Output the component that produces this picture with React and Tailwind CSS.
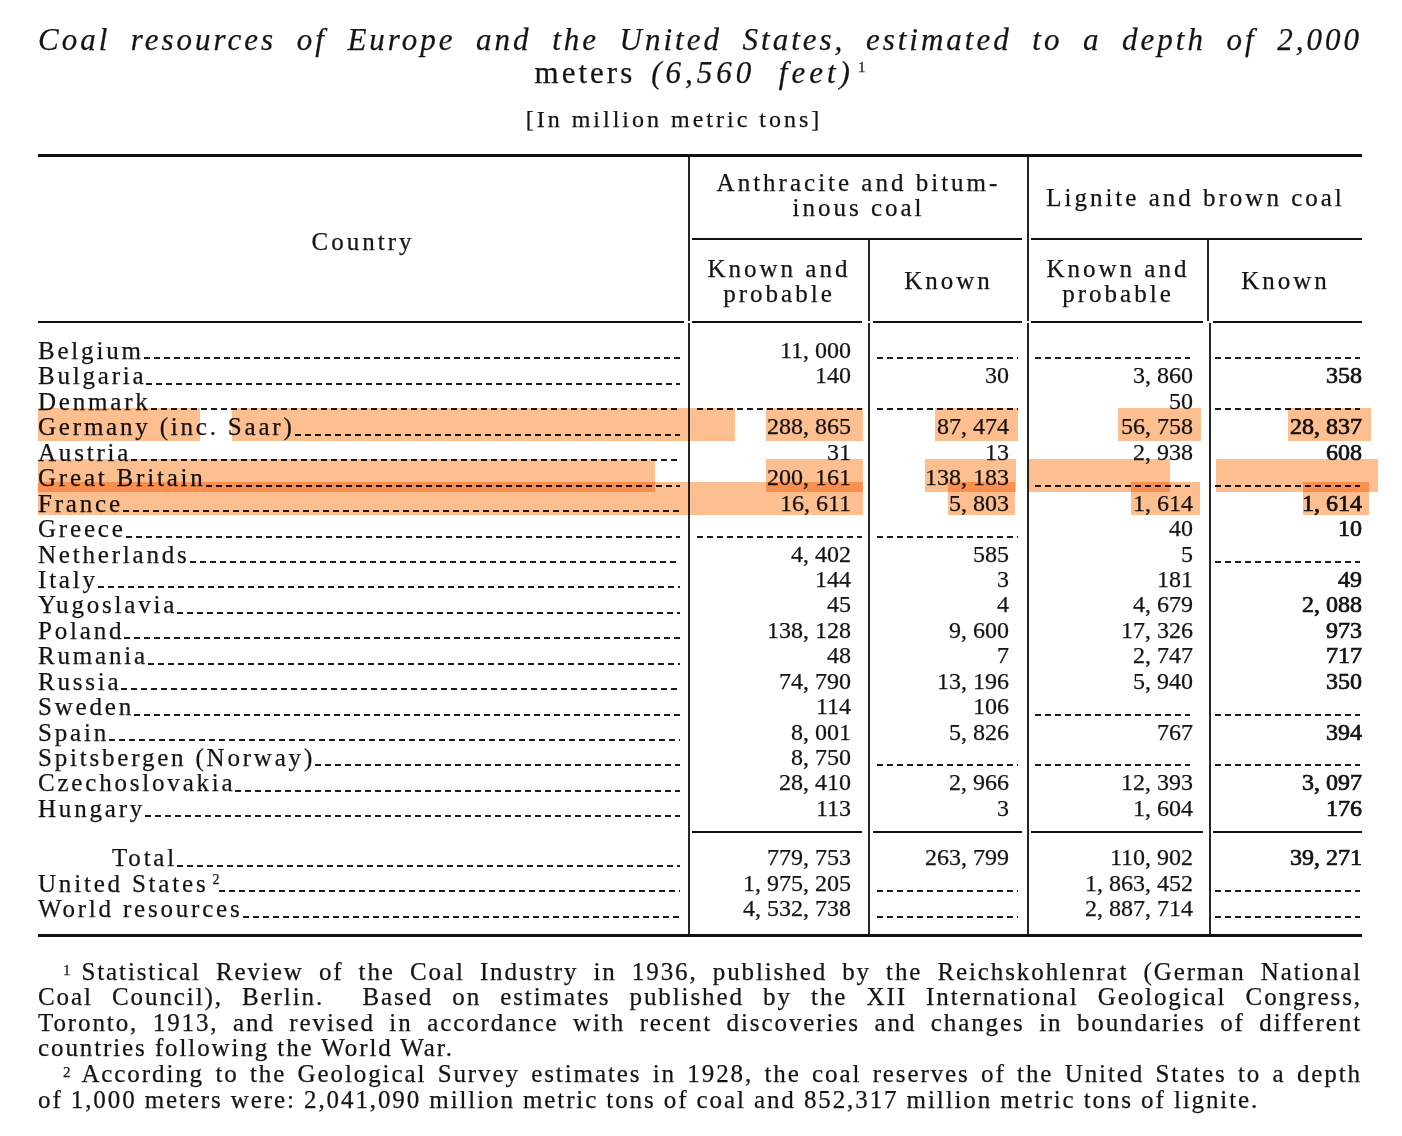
import React from "react";

const DASH =
  "h-[2px] bg-[image:repeating-linear-gradient(90deg,#1c1c1c_0px,#1c1c1c_6px,transparent_6px,transparent_10px)]";

const COLS = "grid grid-cols-[650px_180px_159px_182px_153px]";
const VLINE = "border-l-2 border-[#262626]";

const numPad = ["pr-[17px]", "pr-[18px]", "pr-[16px]", "pr-0"];
const dashPad = [
  "ml-[7px] mr-[6px]",
  "ml-[7px] mr-[9px]",
  "ml-[6px] mr-[19px]",
  "ml-[4px] mr-[2px]",
];
const numStyle = ["", "", "", "[-webkit-text-stroke:0.7px_#111]"];

const data = [
  ["Belgium", ["11, 000", null, null, null]],
  ["Bulgaria", ["140", "30", "3, 860", "358"]],
  ["Denmark", [null, null, "50", null]],
  ["Germany (inc. Saar)", ["288, 865", "87, 474", "56, 758", "28, 837"]],
  ["Austria", ["31", "13", "2, 938", "608"]],
  ["Great Britain", ["200, 161", "138, 183", null, null]],
  ["France", ["16, 611", "5, 803", "1, 614", "1, 614"]],
  ["Greece", [null, null, "40", "10"]],
  ["Netherlands", ["4, 402", "585", "5", null]],
  ["Italy", ["144", "3", "181", "49"]],
  ["Yugoslavia", ["45", "4", "4, 679", "2, 088"]],
  ["Poland", ["138, 128", "9, 600", "17, 326", "973"]],
  ["Rumania", ["48", "7", "2, 747", "717"]],
  ["Russia", ["74, 790", "13, 196", "5, 940", "350"]],
  ["Sweden", ["114", "106", null, null]],
  ["Spain", ["8, 001", "5, 826", "767", "394"]],
  ["Spitsbergen (Norway)", ["8, 750", null, null, null]],
  ["Czechoslovakia", ["28, 410", "2, 966", "12, 393", "3, 097"]],
  ["Hungary", ["113", "3", "1, 604", "176"]],
];

const totals = [
  [
    <span key="t" className="pl-[74px]">Total</span>,
    ["779, 753", "263, 799", "110, 902", "39, 271"],
  ],
  [
    <span key="u">
      United States
      <span className="text-[14px] leading-none relative top-[-8px] ml-[4px] tracking-normal">2</span>
    </span>,
    ["1, 975, 205", null, "1, 863, 452", null],
  ],
  ["World resources", ["4, 532, 738", null, "2, 887, 714", null]],
];

function Cell({ v, i }) {
  return (
    <div className={`${VLINE} flex items-end justify-end`}>
      {v ? (
        <span
          className={`${numPad[i]} ${numStyle[i]} leading-[25.45px] text-[24px] whitespace-nowrap`}
        >
          {v}
        </span>
      ) : (
        <div className={`${DASH} ${dashPad[i]} flex-1 mb-[4px]`} />
      )}
    </div>
  );
}

function Row({ label, vals }) {
  return (
    <div className={`${COLS} h-[25.45px]`}>
      <div className="flex items-end pr-[8px]">
        <span className="leading-[25.45px] text-[25px] tracking-[2.8px] whitespace-nowrap">
          {label}
        </span>
        <div className={`${DASH} flex-1 mb-[4px]`} />
      </div>
      {vals.map((v, i) => (
        <Cell key={i} v={v} i={i} />
      ))}
    </div>
  );
}

function Spacer({ h }) {
  return (
    <div className={`${COLS} ${h}`}>
      <div />
      <div className={VLINE} />
      <div className={VLINE} />
      <div className={VLINE} />
      <div className={VLINE} />
    </div>
  );
}

const highlights = [
  // Germany
  "left-[38px] top-[408px] w-[162px] h-[33px]",
  "left-[232px] top-[408px] w-[503px] h-[33px]",
  "left-[766px] top-[408px] w-[97px] h-[33px]",
  "left-[935px] top-[408px] w-[83px] h-[33px]",
  "left-[1118px] top-[408px] w-[83px] h-[33px]",
  "left-[1288px] top-[408px] w-[83px] h-[33px]",
  // Great Britain
  "left-[38px] top-[459px] w-[617px] h-[33px]",
  "left-[766px] top-[459px] w-[97px] h-[33px]",
  "left-[925px] top-[459px] w-[91px] h-[33px]",
  "left-[1028px] top-[459px] w-[142px] h-[33px]",
  "left-[1216px] top-[459px] w-[162px] h-[33px]",
  // France
  "left-[38px] top-[482px] w-[825px] h-[33px]",
  "left-[948px] top-[482px] w-[67px] h-[33px]",
  "left-[1131px] top-[482px] w-[69px] h-[33px]",
  "left-[1303px] top-[482px] w-[66px] h-[33px]",
];

export default function App() {
  return (
    <div className="relative w-[1402px] h-[1136px] bg-white overflow-hidden text-[#141414] [-webkit-text-stroke:0.25px_#141414] font-['Liberation_Serif','Times_New_Roman',serif]">
      <div className="pl-[38px] pr-[40px] pt-[22px]">
        {/* Title */}
        <div className="h-[36px] leading-[36px] text-[31px] italic tracking-[3px] text-justify [text-align-last:justify]">
          Coal resources of Europe and the United States, estimated to a depth of 2,000
        </div>
        <div className="h-[30px] leading-[30px] text-[31px] flex justify-center items-baseline">
          <span className="tracking-[3px]">meters</span>
          <span className="italic tracking-[4px] ml-[16px]">(6,560&nbsp; feet)</span>
          <span className="text-[15px] leading-none relative top-[-11px] ml-[4px]">1</span>
        </div>
        <div className="mt-[16px] h-[30px] leading-[30px] text-[24px] tracking-[3px] text-center pr-[52px]">
          [In million metric tons]
        </div>

        {/* Top rule */}
        <div className="mt-[20px] h-[3px] bg-[#111]" />

        {/* Header */}
        <div className="flex h-[164px] text-[25px] leading-[25px] tracking-[3px]">
          <div className="w-[650px] flex items-center justify-center pt-[5px]">Country</div>
          <div className={`w-[339px] ${VLINE} flex flex-col`}>
            <div className="h-[81px] flex flex-col items-center justify-center pb-[6px] text-center">
              <div>Anthracite and bitum-</div>
              <div>inous coal</div>
            </div>
            <div className="h-[2px] bg-[#111] ml-[2px] mr-[5px]" />
            <div className="flex-1 flex">
              <div className="w-[178px] flex flex-col items-center justify-center text-center">
                <div>Known and</div>
                <div>probable</div>
              </div>
              <div className={`flex-1 ${VLINE} flex items-center justify-center`}>Known</div>
            </div>
          </div>
          <div className={`w-[335px] ${VLINE} flex flex-col`}>
            <div className="h-[81px] flex items-center justify-center">Lignite and brown coal</div>
            <div className="h-[2px] bg-[#111] ml-[2px]" />
            <div className="flex-1 flex">
              <div className="w-[178px] flex flex-col items-center justify-center text-center">
                <div>Known and</div>
                <div>probable</div>
              </div>
              <div className={`flex-1 ${VLINE} flex items-center justify-center`}>Known</div>
            </div>
          </div>
        </div>

        {/* Header bottom rule (segmented) */}
        <div className={`${COLS} h-[2px]`}>
          <div className="bg-[#111] mr-[4px]" />
          <div className="bg-[#111] ml-[4px] mr-[6px]" />
          <div className="bg-[#111] ml-[5px] mr-[5px]" />
          <div className="bg-[#111] ml-[4px] mr-[6px]" />
          <div className="bg-[#111] ml-[4px]" />
        </div>

        <Spacer h="h-[15px]" />
        {data.map(([label, vals]) => (
          <Row key={label} label={label} vals={vals} />
        ))}
        <Spacer h="h-[10px]" />
        <div className={`${COLS} h-[2px]`}>
          <div />
          <div className={`${VLINE} flex`}>
            <div className="flex-1 bg-[#111] ml-[2px] mr-[6px]" />
          </div>
          <div className={`${VLINE} flex`}>
            <div className="flex-1 bg-[#111] ml-[3px] mr-[5px]" />
          </div>
          <div className={`${VLINE} flex`}>
            <div className="flex-1 bg-[#111] ml-[2px] mr-[6px]" />
          </div>
          <div className={`${VLINE} flex`}>
            <div className="flex-1 bg-[#111] ml-[2px]" />
          </div>
        </div>
        <Spacer h="h-[12px]" />
        {totals.map(([label, vals], idx) => (
          <Row key={idx} label={label} vals={vals} />
        ))}
        <Spacer h="h-[12px]" />

        {/* Bottom rule */}
        <div className="h-[3px] bg-[#111]" />

        {/* Footnotes */}
        <div className="mt-[22px] text-[25px] leading-[25.6px] tracking-[1.9px]">
          <div className="h-[25.6px] text-justify [text-align-last:justify] pl-[25px]">
            <span className="text-[15px] leading-none relative top-[-5px] mr-[9px]">1</span>Statistical Review of the Coal Industry in 1936, published by the Reichskohlenrat (German National
          </div>
          <div className="h-[25.6px] text-justify [text-align-last:justify]">
            Coal Council), Berlin.&nbsp; Based on estimates published by the XII International Geological Congress,
          </div>
          <div className="h-[25.6px] text-justify [text-align-last:justify]">
            Toronto, 1913, and revised in accordance with recent discoveries and changes in boundaries of different
          </div>
          <div className="h-[25.6px]">countries following the World War.</div>
          <div className="h-[25.6px] text-justify [text-align-last:justify] pl-[25px]">
            <span className="text-[15px] leading-none relative top-[-5px] mr-[9px]">2</span>According to the Geological Survey estimates in 1928, the coal reserves of the United States to a depth
          </div>
          <div className="h-[25.6px]">
            of 1,000 meters were: 2,041,090 million metric tons of coal and 852,317 million metric tons of lignite.
          </div>
        </div>
      </div>

      {/* Highlighter marks */}
      {highlights.map((c, i) => (
        <div
          key={i}
          className={`absolute ${c} bg-[#fdbf8f] mix-blend-multiply pointer-events-none`}
        />
      ))}
    </div>
  );
}
